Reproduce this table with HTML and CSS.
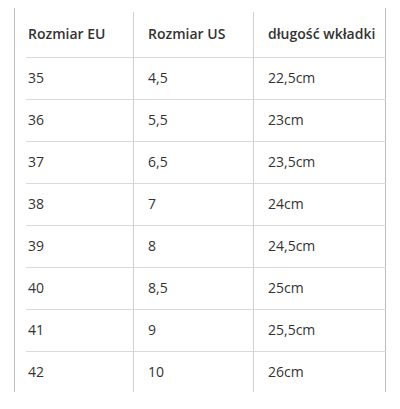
FILE: index.html
```html
<!DOCTYPE html>
<html lang="pl">
<head>
<meta charset="utf-8">
<link rel="stylesheet" href="styles.css">
</head>
<body>
<div class="frame">
  <table class="sizes">
    <thead>
      <tr><th>Rozmiar EU</th><th>Rozmiar US</th><th>długość wkładki</th></tr>
    </thead>
    <tbody>
      <tr><td>35</td><td>4,5</td><td>22,5cm</td></tr>
      <tr><td>36</td><td>5,5</td><td>23cm</td></tr>
      <tr><td>37</td><td>6,5</td><td>23,5cm</td></tr>
      <tr><td>38</td><td>7</td><td>24cm</td></tr>
      <tr><td>39</td><td>8</td><td>24,5cm</td></tr>
      <tr><td>40</td><td>8,5</td><td>25cm</td></tr>
      <tr><td>41</td><td>9</td><td>25,5cm</td></tr>
      <tr><td>42</td><td>10</td><td>26cm</td></tr>
    </tbody>
  </table>
</div>
</body>
</html>
```
FILE: styles.css
```css
html, body {
  margin: 0;
  padding: 0;
  background: #ffffff;
}
body {
  font-family: "Open Sans", "Liberation Sans", sans-serif;
  font-size: 14px;
  color: #333333;
  padding-top: 8px;
}
.frame {
  margin-left: 14px;
  width: 372px;
  height: 384px;
  border-left: 1px solid #bdbdbd;
  border-right: 1px solid #bdbdbd;
  padding-top: 4px;
  box-sizing: border-box;
}
.sizes {
  margin-left: 11px;
  width: 360px;
  border-collapse: collapse;
  table-layout: fixed;
}
.sizes th,
.sizes td {
  text-align: left;
  padding: 0 0 2px 14px;
  border-left: 1px solid #d0d0d0;
  vertical-align: middle;
}
.sizes th:first-child,
.sizes td:first-child {
  border-left: none;
  padding-left: 2px;
  width: 105px;
}
.sizes th:nth-child(2),
.sizes td:nth-child(2) {
  width: 105px;
}
.sizes th {
  font-weight: 600;
  height: 43px;
  border-bottom: 1px solid #d9d9d9;
}
.sizes td {
  height: 39px;
  border-bottom: 1px solid #d9d9d9;
}
.sizes tbody tr:last-child td {
  border-bottom: none;
  height: 38px;
}
```
